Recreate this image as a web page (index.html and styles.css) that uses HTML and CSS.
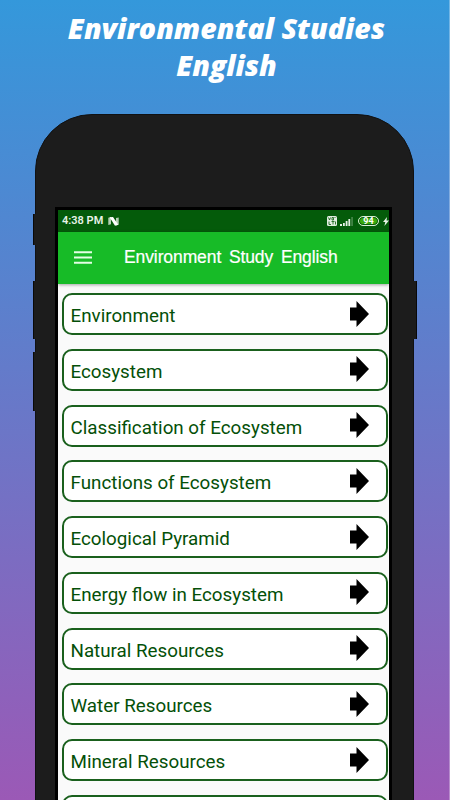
FILE: index.html
```html
<!DOCTYPE html>
<html lang="en">
<head>
<meta charset="utf-8">
<title>Environmental Studies English</title>
<link rel="stylesheet" href="styles.css">
</head>
<body>
<main class="promo">
  <h1 class="headline">Environmental Studies<br>English</h1>
  <div class="phone">
    <i class="key key-a"></i><i class="key key-b"></i><i class="key key-c"></i><i class="key key-d"></i>
    <div class="screen">
      <div class="status">
        <span class="time">4:38 PM</span>
        <svg class="nlogo" width="11" height="9" viewBox="0 0 11 9"><path d="M.3.8 3 0v7.200L.3 8zM8 1l2.700-.6v7.400L8 8.500z" fill="#b5d0b5"/><path d="M1.600.3 5 0l5.200 7.800L7 8.700z" fill="#fff"/></svg>
        <svg class="volte" width="10" height="10" viewBox="0 0 10 10"><rect width="10" height="10" rx="1.500" fill="#e2eee2"/><path d="M1.500 1.500 2.500 4l1-2.500M5 1.500h1.500V4H5zM7.500 1.500h1M2 5.500v3h2M4.500 5.500h3M6 5.500v3M8.500 5.500v3" fill="none" stroke="#075b0a" stroke-width=".8"/></svg>
        <svg class="signal" width="13" height="9" viewBox="0 0 13 9"><path d="M0 7h2v2H0zM3 6h1.800v3H3zM5.700 4h1.800v5H5.700zM8.400 2h1.800v7H8.400z" fill="#e4f0e4"/><path d="M11.400 0h1.300v9h-1.300z" fill="#5b955d"/></svg>
        <span class="battery">94</span>
        <svg class="bolt" width="6" height="9" viewBox="0 0 6 9"><path d="M4 0 0 5h2.300L1.400 9 6 3.600H3.500z" fill="#e8f4e8"/></svg>
      </div>
      <header class="appbar">
        <svg class="menu" width="18" height="13" viewBox="0 0 18 13"><path d="M0 1.200h18M0 6.500h18M0 11.800h18" stroke="#e4ffe5" stroke-width="2"/></svg>
        <span class="apptitle">Environment Study English</span>
      </header>
      <div class="list">
        <div class="row"><span>Environment</span><svg class="arrow" viewBox="0 0 19 26"><path d="M0 6.500h6.500V0L19 13 6.500 26v-6.500H0z"/></svg></div>
        <div class="row"><span>Ecosystem</span><svg class="arrow" viewBox="0 0 19 26"><path d="M0 6.500h6.500V0L19 13 6.500 26v-6.500H0z"/></svg></div>
        <div class="row"><span>Classification of Ecosystem</span><svg class="arrow" viewBox="0 0 19 26"><path d="M0 6.500h6.500V0L19 13 6.500 26v-6.500H0z"/></svg></div>
        <div class="row"><span>Functions of Ecosystem</span><svg class="arrow" viewBox="0 0 19 26"><path d="M0 6.500h6.500V0L19 13 6.500 26v-6.500H0z"/></svg></div>
        <div class="row"><span>Ecological Pyramid</span><svg class="arrow" viewBox="0 0 19 26"><path d="M0 6.500h6.500V0L19 13 6.500 26v-6.500H0z"/></svg></div>
        <div class="row"><span>Energy flow in Ecosystem</span><svg class="arrow" viewBox="0 0 19 26"><path d="M0 6.500h6.500V0L19 13 6.500 26v-6.500H0z"/></svg></div>
        <div class="row"><span>Natural Resources</span><svg class="arrow" viewBox="0 0 19 26"><path d="M0 6.500h6.500V0L19 13 6.500 26v-6.500H0z"/></svg></div>
        <div class="row"><span>Water Resources</span><svg class="arrow" viewBox="0 0 19 26"><path d="M0 6.500h6.500V0L19 13 6.500 26v-6.500H0z"/></svg></div>
        <div class="row"><span>Mineral Resources</span><svg class="arrow" viewBox="0 0 19 26"><path d="M0 6.500h6.500V0L19 13 6.500 26v-6.500H0z"/></svg></div>
        <div class="row"></div>
      </div>
    </div>
  </div>
</main>
</body>
</html>
```
FILE: styles.css
```css
* { box-sizing: border-box; }
body { margin: 0; }
.promo {
  width: 450px;
  height: 800px;
  overflow: hidden;
  background: linear-gradient(#3498db, #9b59b6);
  box-shadow: inset -1px 0 rgba(255, 255, 255, .3);
}
.headline {
  margin: 0;
  height: 114px;
  padding: 10px 0 0 3px;
  text-align: center;
  color: #fff;
  font: italic 800 28.500px/37px "Open Sans", sans-serif;
  white-space: nowrap;
}
.phone {
  position: relative;
  width: 379px;
  height: 760px;
  margin-left: 35px;
  padding: 92px 21px 0 19px;
  border: 1px solid #101113;
  border-radius: 57px 57px 0 0;
  background: #1c1c1c;
}
.key {
  position: absolute;
  width: 3px;
  background: #1c1c1c;
  border-left: 1px solid #090909;
}
.key-a { left: -3px; top: 99px; height: 31px; }
.key-b { left: -3px; top: 166px; height: 58px; }
.key-c { left: -3px; top: 237px; height: 59px; }
.key-d { right: -4px; top: 166px; width: 4px; height: 58px; border-left: 0; border-right: 1px solid #090909; }
.screen {
  height: 700px;
  border: 3px solid #000;
  background: #fafafa;
}
.status {
  display: flex;
  align-items: center;
  height: 22px;
  padding-left: 4px;
  background: #045b0a;
}
.time { width: 46px; color: #e8f3e8; font: 600 11px/22px Roboto, sans-serif; white-space: nowrap; }
.volte { margin-left: auto; }
.signal { margin-left: 3px; }
.battery {
  width: 21px;
  height: 10px;
  margin: 0 4px 0 5px;
  border: 1px solid #d8efd4;
  border-radius: 5px;
  background: #39aa0d;
  box-shadow: inset 0 0 0 1px #075b0a;
  color: #fff;
  font: 700 9px/8px Roboto, sans-serif;
  text-align: center;
}
.appbar {
  display: flex;
  align-items: center;
  height: 52px;
  padding-left: 16px;
  background: #17bb27;
  box-shadow: 0 1px 3px rgba(0, 0, 0, .35);
}
.menu { margin-top: -2px; }
.apptitle {
  margin: -2px 0 0 32px;
  color: #fff;
  font: 17.500px/24px "Liberation Sans", sans-serif;
  letter-spacing: -.1px;
  word-spacing: 3px;
  white-space: nowrap;
  -webkit-text-stroke: .2px #fff;
}
.list {
  display: flex;
  flex-direction: column;
  gap: 13.75px;
  padding: 9px 1px 0 3.500px;
}
.row {
  display: flex;
  align-items: center;
  justify-content: space-between;
  flex: none;
  height: 42px;
  padding: 1px 17px 0 7px;
  border: 2px solid #1a601d;
  border-radius: 10px;
  background: #fff;
  color: #045008;
  font: 18.800px/24px Roboto, sans-serif;
}
.row span { padding-top: 3px; white-space: nowrap; }
.arrow { width: 19px; height: 26px; margin-top: -2px; fill: #000; }
```
